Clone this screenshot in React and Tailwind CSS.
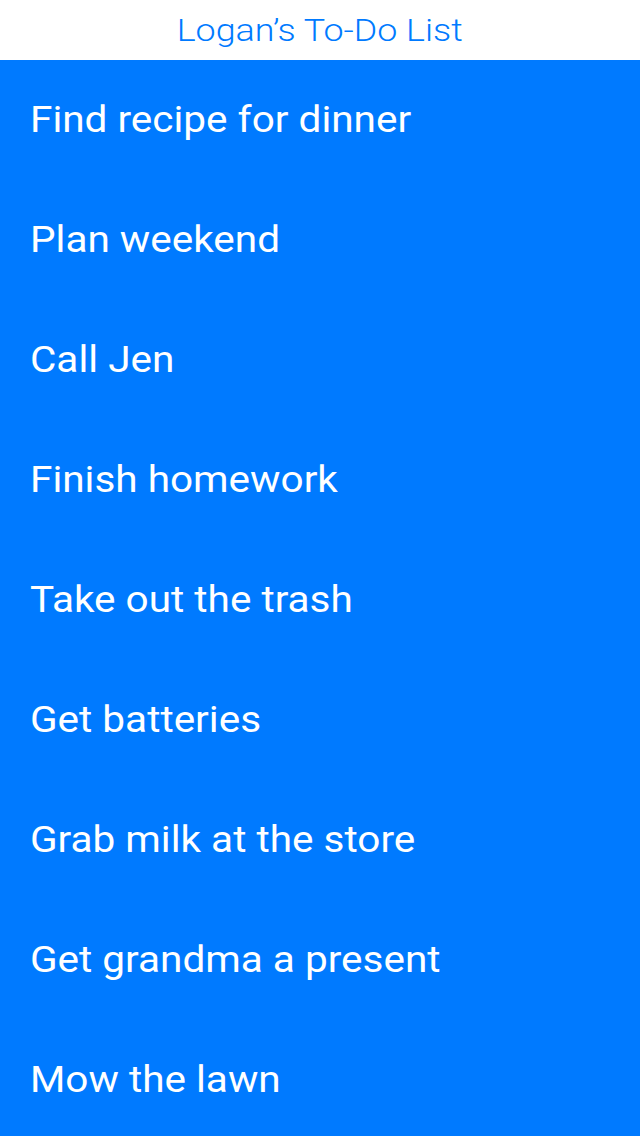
import React from "react";

const todos = [
  "Find recipe for dinner",
  "Plan weekend",
  "Call Jen",
  "Finish homework",
  "Take out the trash",
  "Get batteries",
  "Grab milk at the store",
  "Get grandma a present",
  "Mow the lawn",
];

export default function App() {
  return (
    <div className="h-[1136px] overflow-hidden bg-[#007aff] font-['Roboto',sans-serif]">
      {/* Header */}
      <header className="h-[60px] bg-white flex items-center justify-center">
        <h1 className="inline-block text-[32px] leading-none font-light text-[#007aff] scale-x-[1.12] origin-center">
          Logan’s To-Do List
        </h1>
      </header>

      {/* List */}
      <ul className="flex flex-col">
        {todos.map((t) => (
          <li key={t} className="h-[120px] shrink-0 flex items-center px-[30px] text-white text-[36px]">
            <span className="inline-block whitespace-nowrap scale-x-[1.125] origin-left">{t}</span>
          </li>
        ))}
      </ul>
    </div>
  );
}
